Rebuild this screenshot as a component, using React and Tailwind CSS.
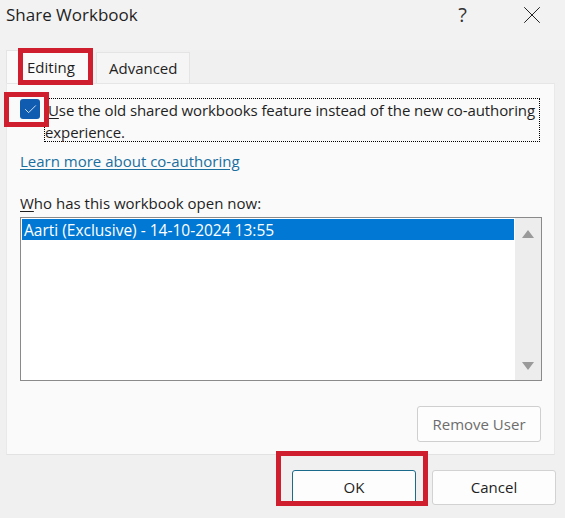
import React from "react";
import { Check, X } from "lucide-react";

const App = () => {
  return (
    <main className="relative w-[565px] h-[518px] overflow-hidden flex flex-col bg-[#f0f0f0] text-[#1f1f1f] font-['Open_Sans','Noto_Sans',sans-serif] text-[15px]">
      {/* title bar */}
      <header className="h-[50px] pl-[6px] pr-[18px] flex items-start justify-between bg-[#f2f2f2]">
        <h1 className="mt-[3px] text-[17px] leading-[24px] font-normal">Share Workbook</h1>
        <div className="flex items-center gap-[50px]">
          <span className="text-[20px] leading-[30px] text-[#333]">?</span>
          <X className="w-[30px] h-[30px] text-[#222]" strokeWidth={0.8} />
        </div>
      </header>

      {/* tabs */}
      <nav className="h-[33px] ml-[6px] flex items-end">
        <div className="w-[86px] h-[33px] pl-[20px] pt-[5px] bg-[#fafafa] border border-b-0 border-[#e4e4e4]">
          Editing
        </div>
        <div className="w-[94px] h-[31px] ml-[4px] pl-[12px] pt-[4px] bg-[#f5f5f5] border border-b-0 border-[#e4e4e4]">
          Advanced
        </div>
      </nav>

      {/* panel */}
      <section className="w-[549px] h-[372px] ml-[6px] pl-[13px] pr-[12px] pt-[14px] bg-[#fafafa] border border-t-[#e6e6e6] border-x-[#e9e9e9] border-b-[#e2e2e2] flex flex-col">
        <div className="flex items-start gap-[4px]">
          <span className="mt-px w-[20px] h-[20px] shrink-0 rounded-[3px] bg-[#0f5cb0] flex items-center justify-center">
            <Check className="w-[15px] h-[15px] text-white" strokeWidth={1.3} />
          </span>
          <p className="w-[496px] h-[44px] pl-[3px] leading-[22px] whitespace-nowrap tracking-[-0.1px] border border-dotted border-black">
            <span className="underline underline-offset-2">U</span>se the old shared workbooks feature instead of the new co-authoring
            <br />
            <span className="-ml-[3px]">experience.</span>
          </p>
        </div>

        <a className="mt-[8px] leading-[22px] self-start text-[#1a6f9e] underline underline-offset-2">
          Learn more about co-authoring
        </a>

        <label className="mt-[20px] leading-[22px]">
          <span className="underline underline-offset-2">W</span>ho has this workbook open now:
        </label>

        <div className="mt-[3px] w-[522px] h-[164px] p-px bg-white border border-[#8a8a8a] flex">
          <div className="flex-1 min-w-0">
            <div className="h-[21px] pl-[2px] leading-[23px] text-[15.5px] bg-[#0078d4] text-white">
              Aarti (Exclusive) - 14-10-2024 13:55
            </div>
          </div>
          <div className="w-[26px] ml-px -my-px -mr-px bg-[#ededed] flex flex-col items-center justify-between pt-[12px] pb-[10px]">
            <svg width="12" height="8" viewBox="0 0 12 8" fill="#9a9a9a"><path d="M6 0l6 8H0z" /></svg>
            <svg width="12" height="8" viewBox="0 0 12 8" fill="#9a9a9a"><path d="M0 0h12L6 8z" /></svg>
          </div>
        </div>

        <div className="mt-[25px] flex justify-end">
          <button className="w-[124px] h-[36px] rounded-[3px] bg-[#fdfdfd] border border-[#cfcfcf] text-[#6d6d6d] mr-px">
            Remove User
          </button>
        </div>
      </section>

      {/* footer */}
      <footer className="flex justify-end gap-[16px] pt-[15px] pr-[9px]">
        <button className="w-[124px] h-[35px] rounded-[3px] bg-[#fdfdfd] border border-[#1a6a8c] text-[#1f1f1f]">OK</button>
        <button className="w-[124px] h-[35px] rounded-[3px] bg-[#fdfdfd] border border-[#d2d2d2] text-[#1f1f1f]">Cancel</button>
      </footer>

      {/* red annotation boxes over the dialog */}
      <div className="absolute left-[18px] top-[48px] w-[75px] h-[37px] border-[5px] border-[#cf1f2e]" />
      <div className="absolute left-[4px] top-[92px] w-[45px] h-[35px] border-[5px] border-[#cf1f2e]" />
      <div className="absolute left-[276px] top-[451px] w-[152px] h-[55px] border-[5px] border-[#cf1f2e]" />
    </main>
  );
};

export default App;
